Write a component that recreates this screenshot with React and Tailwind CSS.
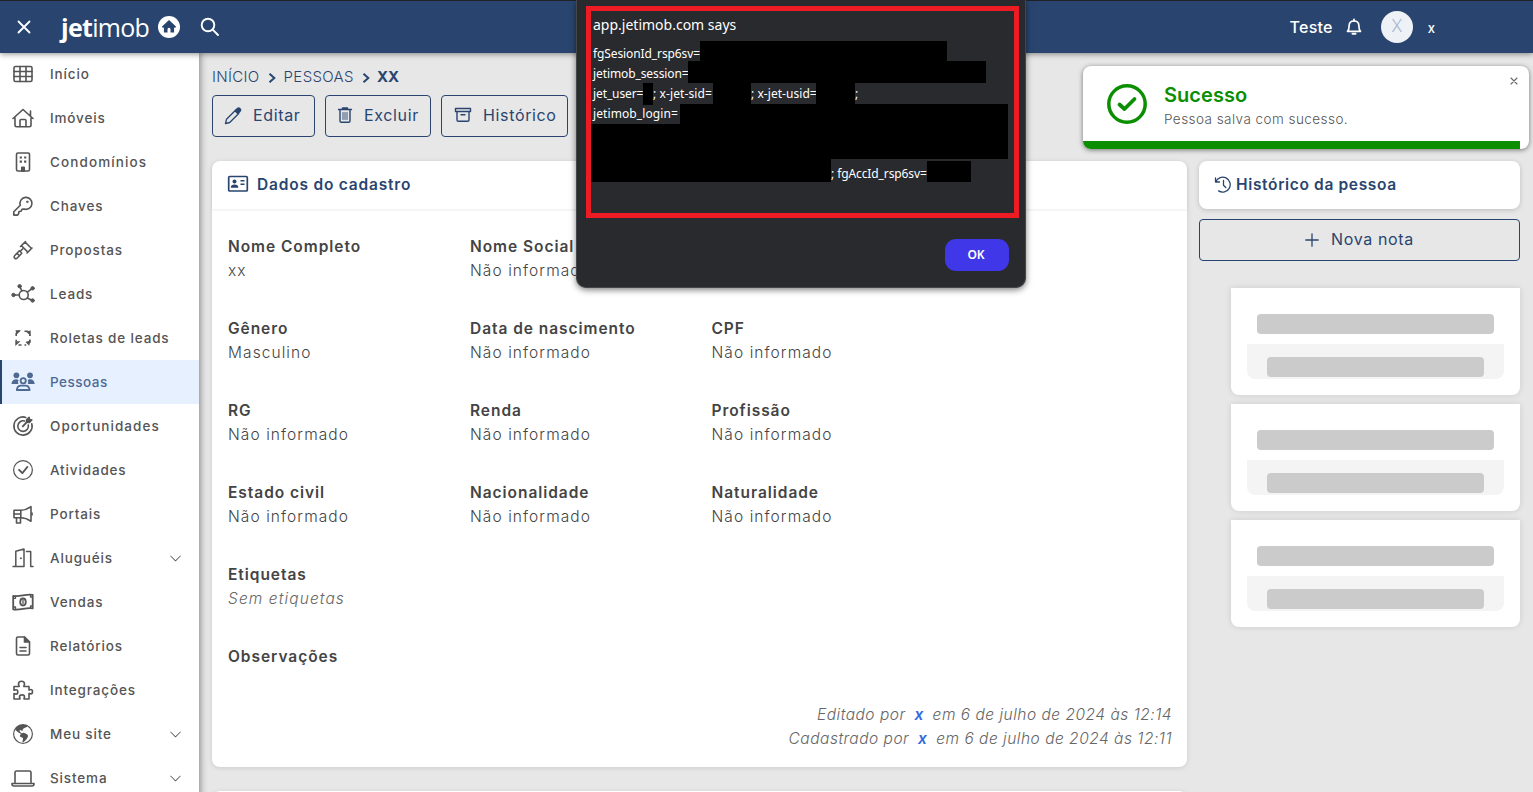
import React from 'react';
import { BsCheckCircle, BsChevronDown, BsGlobeAmericas } from 'react-icons/bs';

const Icon = ({ size = 24, children, className = '' }) => (
  <svg
    width={size}
    height={size}
    viewBox={`0 0 ${size} ${size}`}
    fill="none"
    stroke="currentColor"
    strokeWidth="1.6"
    strokeLinecap="round"
    strokeLinejoin="round"
    className={`shrink-0 ${className}`}
  >
    {children}
  </svg>
);

const icons = {
  grid: (
    <Icon>
      <rect x="3" y="4.5" width="18" height="15" rx="1.5" />
      <path d="M3 9.5h18M3 14.5h18M9 4.5v15M15 4.5v15" />
    </Icon>
  ),
  home: (
    <Icon>
      <path d="M2 12.5 12 3.5l10 9M19.5 9.500V5M4 11.5v7.5c0 1 .6 1.7 1.7 1.7h12.6c1.1 0 1.7-.7 1.7-1.7v-7.5" />
      <path d="M9 20.5v-6c0-.7.4-1 1-1h4c.6 0 1 .3 1 1v6" />
    </Icon>
  ),
  building: (
    <Icon>
      <rect x="5.5" y="3" width="13" height="18" rx="1.5" />
      <path d="M8.7 7.500h2.200M13.100 7.500h2.200M8.700 11.700h2.200M13.100 11.700h2.200" strokeWidth="2.2" strokeLinecap="butt" />
      <path d="M10.5 21v-4h3v4z" fill="currentColor" strokeWidth="1" />
    </Icon>
  ),
  key: (
    <Icon>
      <path d="M9.3 11.3A6 6 0 1 1 13 15l-2 .4-.9 1.8-2.1.3-.4 2.4-1.2 1.2H2.8v-3.4z" />
      <circle cx="16.3" cy="7.8" r="0.9" fill="currentColor" strokeWidth="0.6" />
    </Icon>
  ),
  gavel: (
    <Icon>
      <path d="m9.500 8.500 5-5M16 15l5-5M10.500 7.800l6.300 6.300M14 4l6.300 6.300" />
      <path d="m11.800 10.800-2.300 2.300M8.300 12.800l2.500 2.500-4.500 4.700c-.8.8-1.900.8-2.600.1s-.7-1.800.1-2.600zM6.200 15.500l1.900 1.900" strokeWidth="1.500" />
    </Icon>
  ),
  leads: (
    <Icon>
      <circle cx="12.700" cy="13" r="4.500" />
      <path d="M3 13h5.2M8.800 4.500l2 4.300M21 6.600l-4.700 3.600M16.200 16l4.600 2.300" />
      <g fill="currentColor" strokeWidth="1">
        <circle cx="2.5" cy="13" r="1.7" />
        <circle cx="8.6" cy="4.200" r="1.7" />
        <circle cx="21.6" cy="6.300" r="1.7" />
        <circle cx="21.6" cy="18.5" r="1.7" />
      </g>
    </Icon>
  ),
  roulette: (
    <Icon>
      <path d="M5.200 10V7M13.500 5.200h3.300M18.800 13.500v3.500M10.500 19H7.500M8.500 5.200H6.800M18.800 10V8.500M13.500 19h1.700M5.200 13.700v1.800" strokeLinecap="butt" />
      <g fill="currentColor" stroke="none">
        <path d="M4.500 4.300h5.500L5.500 8.800zM19.700 4.500V10l-4.800-4.500zM19.700 14.200l-1.500 5.500-3.700-3.700zM4.300 15.200h5.200L4.300 20z" />
      </g>
    </Icon>
  ),
  people: (
    <Icon>
      <g fill="currentColor" stroke="none">
        <circle cx="5.4" cy="5.3" r="2.9" />
        <circle cx="19" cy="5.3" r="2.9" />
        <path d="M.5 14c.2-3 2-4.7 4.7-4.7 1 0 1.8.2 2.4.6-.8 1.4-.7 2.8-.1 4.1zM23.7 14c-.2-3-2-4.7-4.7-4.7-1 0-1.8.2-2.4.6.8 1.4.7 2.8.1 4.1z" />
      </g>
      <circle cx="12.2" cy="10.7" r="2.6" strokeWidth="1.8" />
      <path d="M5.8 20c.3-3 2.1-4.4 4.2-4.4h4.4c2.1 0 3.9 1.4 4.2 4.4z" strokeWidth="1.8" />
    </Icon>
  ),
  target: (
    <Icon>
      <path d="M14.8 3.4A9.1 9.1 0 1 0 20.8 9.7M13.5 7a5.3 5.3 0 1 0 3.8 4" />
      <path d="m11.8 12.3 4-4.2" strokeWidth="1.9" />
      <path d="m15.5 5.7 2.6-2.5.6 2.2 2.2.6-2.5 2.6-2.9-.2z" fill="currentColor" strokeWidth="1.4" />
    </Icon>
  ),
  check: <BsCheckCircle className="size-5 shrink-0" />,
  megaphone: (
    <Icon>
      <path d="M3 8.3h7c4 0 6.8-1.4 10-3.6v14.6c-3.2-2.2-6-3.6-10-3.6H3z" />
      <path d="M5.5 16v5h4v-5M9.8 8.5V16M3 12h6.5M21 11v2" />
    </Icon>
  ),
  door: (
    <Icon>
      <path d="M2 20.5h11V3L4.8 5.3v15M15.5 5.5h4.2v15H22" strokeWidth="1.5" />
      <circle cx="9.8" cy="12.3" r="0.7" fill="currentColor" strokeWidth="0.5" />
    </Icon>
  ),
  money: (
    <Icon>
      <path d="M2.2 5.8c6.5 1.3 13-2.3 19.5-1v13.6c-6.5-1.3-13 2.3-19.5 1z" strokeWidth="1.800" />
      <ellipse cx="12" cy="12" rx="2.800" ry="3.500" strokeWidth="1.800" />
      <path d="M12 10.500v3M4.5 6v2.3H2.5M19.5 4.7V7h2M2.5 17h2v2.5M21.5 16h-2v2" strokeWidth="1.3" />
    </Icon>
  ),
  report: (
    <Icon>
      <path d="M5.5 4.5c0-.9.5-1.5 1.5-1.5h6.5l5 5v11.5c0 .9-.5 1.5-1.5 1.5H7c-1 0-1.5-.6-1.5-1.5zM9 13.5h6M9 17h6" />
      <path d="M13.5 3v5h5z" fill="currentColor" />
    </Icon>
  ),
  puzzle: (
    <Icon>
      <path d="M3 8.5h5.2c.3-.6-.7-1.3-.7-2.6C7.500 4 9 3.200 10.500 3.200s3 .8 3 2.700c0 1.300-1 2-.7 2.600H18V12c.6.3 1-.5 1.800-.5 1.100 0 1.700 1 1.700 2.200 0 1.300-.7 2.200-1.800 2.200-.8 0-1.100-.7-1.700-.5V21h-5c-.3-.7.500-1 .5-2.100 0-1.200-1-2-2.500-2s-2.500.8-2.500 2c0 1.100.8 1.400.5 2.100H3v-5.300c.6-.3 1.100.4 2 .4 1.100 0 1.800-1 1.800-2.200S6.100 11.700 5 11.700c-.9 0-1.400.8-2 .5z" />
    </Icon>
  ),
  globe: <BsGlobeAmericas className="size-5 shrink-0" />,
  laptop: (
    <Icon>
      <path d="M4 16.500V6.500c0-1 .6-1.500 1.500-1.500h13c.9 0 1.500.5 1.500 1.500v10" />
      <path d="M1 17.500h22v.5c0 1.300-.8 2-2 2H3c-1.200 0-2-.7-2-2z" />
    </Icon>
  ),
};

const menu = [
  { label: 'Início', icon: 'grid' },
  { label: 'Imóveis', icon: 'home' },
  { label: 'Condomínios', icon: 'building', tracking: 'tracking-[1.1px]' },
  { label: 'Chaves', icon: 'key' },
  { label: 'Propostas', icon: 'gavel' },
  { label: 'Leads', icon: 'leads' },
  { label: 'Roletas de leads', icon: 'roulette' },
  { label: 'Pessoas', icon: 'people', active: true, tracking: 'tracking-[0.5px]' },
  { label: 'Oportunidades', icon: 'target', tracking: 'tracking-[1.05px]' },
  { label: 'Atividades', icon: 'check' },
  { label: 'Portais', icon: 'megaphone' },
  { label: 'Aluguéis', icon: 'door', expandable: true },
  { label: 'Vendas', icon: 'money' },
  { label: 'Relatórios', icon: 'report' },
  { label: 'Integrações', icon: 'puzzle' },
  { label: 'Meu site', icon: 'globe', expandable: true },
  { label: 'Sistema', icon: 'laptop', expandable: true },
];

const fields = [
  { label: 'Nome Completo', value: 'xx' },
  { label: 'Nome Social', value: 'Não informado', last: true },
  { label: 'Gênero', value: 'Masculino' },
  { label: 'Data de nascimento', value: 'Não informado' },
  { label: 'CPF', value: 'Não informado' },
  { label: 'RG', value: 'Não informado' },
  { label: 'Renda', value: 'Não informado' },
  { label: 'Profissão', value: 'Não informado' },
  { label: 'Estado civil', value: 'Não informado' },
  { label: 'Nacionalidade', value: 'Não informado' },
  { label: 'Naturalidade', value: 'Não informado' },
];

const Header = () => (
  <header className="relative z-20 flex h-[53px] shrink-0 items-center border-t border-[#202124] bg-[#29456f] pb-px text-white shadow-[0_1px_6px_rgba(0,0,0,0.45)]">
    <Icon size={14} className="ml-[17px] mt-px">
      <path d="m1.500 1.500 11 11m0-11-11 11" strokeWidth="1.8" />
    </Icon>
    <div className="ml-[30px] flex w-[119px] items-center justify-between">
      <span className="font-['Open_Sans','Noto_Sans',sans-serif] text-[25px] leading-8 tracking-[-0.7px]">
        <b>jet</b>imob
      </span>
      <svg width="22" height="22" viewBox="0 0 22 22" className="shrink-0">
        <circle cx="11" cy="11" r="11" fill="#fff" />
        <path d="M11 4 3.800 10.700l1.300 1.300.8-.7v5.200h3.600v-3.200a1.500 1.500 0 0 1 3 0v3.200h3.600v-5.200l.8.700 1.300-1.300z" fill="#29456f" />
      </svg>
    </div>
    <Icon size={20} className="ml-5">
      <circle cx="8" cy="8" r="6.300" strokeWidth="1.900" />
      <path d="m12.700 12.700 5.300 5.300" strokeWidth="1.900" />
    </Icon>
    <div className="ml-auto mr-[98px] flex items-center">
      <span className="text-[16px] font-medium tracking-[0.250px]">Teste</span>
      <Icon size={18} className="ml-3">
        <path d="M2.500 13.300c1.300-1.200 1.600-2.500 1.600-5.300 0-3 1.900-5 4.900-5s4.900 2 4.900 5c0 2.800.3 4.100 1.600 5.300z" strokeWidth="1.700" />
        <path d="M9 1.500V3" strokeWidth="1.800" />
        <path d="M7.500 15.800h3" strokeWidth="2" />
      </Icon>
      <span className="ml-[18px] flex size-8 items-center justify-center rounded-full bg-[#eef1f6] text-[17px] font-light text-[#a9b9d0]">
        X
      </span>
      <span className="ml-[15px] mt-[3px] text-[13px] font-medium leading-4">x</span>
    </div>
  </header>
);

const Sidebar = () => (
  <nav className="relative z-10 -mt-px h-[748px] w-[199px] shrink-0 bg-white shadow-[1px_0_7px_rgba(0,0,0,0.45)]">
    {menu.map(({ label, icon, active, expandable, tracking = 'tracking-[0.85px]' }) => (
      <a
        key={label}
        className={`flex h-11 items-center border-l-2 pr-[17px] ${
          active ? 'border-[#29456f] bg-[#e6f0ff] text-[#4f6a92]' : 'border-transparent text-[#555]'
        }`}
      >
        <span className="ml-[9px] flex w-6 justify-center">{icons[icon]}</span>
        <span className={`ml-[15px] flex-1 whitespace-nowrap text-[13.5px] font-medium ${tracking}`}>{label}</span>
        {expandable && <BsChevronDown className="size-[13px]" />}
      </a>
    ))}
  </nav>
);

const ActionButton = ({ icon, children, className = '' }) => (
  <button
    type="button"
    className={`flex h-[42px] items-center rounded-[4px] border border-[#29456f] text-[16px] tracking-[0.65px] text-[#29456f] ${className}`}
  >
    {icon}
    <span className="-mt-0.5">{children}</span>
  </button>
);

const Crumb = () => (
  <Icon size={10} className="mx-[7px]">
    <path d="m2.500 .8 4.800 4.200-4.800 4.200" strokeWidth="2" strokeLinecap="butt" strokeLinejoin="miter" />
  </Icon>
);

const Field = ({ label, children, className = '' }) => (
  <div className={`mb-[34px] leading-6 ${className}`}>
    <div className="text-[15.5px] font-semibold tracking-[0.95px] text-[#444]">{label}</div>
    {children}
  </div>
);

const DataCard = () => (
  <section className="mt-6 h-[606px] w-[975px] rounded-lg bg-white shadow-[0_1px_5px_rgba(0,0,0,0.12)]">
    <h2 className="flex h-12 items-center rounded-t-lg pl-[15px] text-[15.5px] font-semibold tracking-[0.8px] text-[#29456f] shadow-[0_1px_3px_rgba(0,0,0,0.08)]">
      <Icon size={22} className="-mt-0.5 mr-2">
        <rect x="1.700" y="3.500" width="18.600" height="14.500" rx="1" strokeWidth="1.700" />
        <circle cx="7.500" cy="8.500" r="2" fill="currentColor" stroke="none" />
        <path d="M3.800 14.800c0-2 1.300-3.200 3.700-3.200s3.800 1.200 3.800 3.200z" fill="currentColor" stroke="none" />
        <path d="M13.500 7.800h4M13.500 11.200h4" strokeLinecap="butt" />
      </Icon>
      Dados do cadastro
    </h2>
    <div className="grid grid-cols-[242px_241.5px_1fr] px-4 pt-[26px]">
      {fields.map(({ label, value, last }) => (
        <Field key={label} label={label} className={last ? 'col-span-2' : ''}>
          <div className="text-[15.5px] font-light tracking-[1.08px] text-[#444]">{value}</div>
        </Field>
      ))}
      <Field label="Etiquetas" className="col-span-3">
        <div className="text-[15.5px] font-light italic tracking-[1.1px] text-[#666]">Sem etiquetas</div>
      </Field>
      <Field label="Observações" className="col-span-3" />
    </div>
    <div className="px-[15px] text-right text-[15.5px] font-light italic leading-6 tracking-[0.5px] text-[#666]">
      <p>
        Editado por <b className="mx-[4px] font-semibold text-[#2f6ae0]">x</b> em 6 de julho de 2024 às 12:14
      </p>
      <p>
        Cadastrado por <b className="mx-[4px] font-semibold text-[#2f6ae0]">x</b> em 6 de julho de 2024 às 12:11
      </p>
    </div>
  </section>
);

const SkeletonCard = () => (
  <div className="h-[107px] rounded-b-lg bg-white px-4 pt-[26px] shadow-[0_0_6px_rgba(0,0,0,0.12)]">
    <div className="mx-[10px] h-5 rounded bg-[#cbcbcb]" />
    <div className="mt-[10px] h-[35px] rounded-b-lg bg-[#f4f4f4] px-5 pt-[13px]">
      <div className="h-5 rounded bg-[#cbcbcb]" />
    </div>
  </div>
);

const History = () => (
  <aside className="mt-[108px] w-[321px]">
    <h2 className="flex h-12 items-center rounded-lg bg-white pl-[15px] text-[15.5px] font-semibold tracking-[0.65px] text-[#29456f] shadow-[0_1px_5px_rgba(0,0,0,0.18)]">
      <Icon size={18} className="mr-1">
        <path d="M1.500 2v4h4M1.800 5.700a7.500 7.500 0 1 1 2.800 9.200M9.500 4.500v4.800l2.300 2.200" strokeWidth="1.300" />
      </Icon>
      Histórico da pessoa
    </h2>
    <ActionButton
      className="mt-[10px] w-full justify-center"
      icon={
        <Icon size={14} className="mr-3">
          <path d="M7 .8v12.400M.8 7h12.400" strokeWidth="1.300" />
        </Icon>
      }
    >
      Nova nota
    </ActionButton>
    <div className="ml-8 mt-[27px] flex flex-col gap-[9px]">
      <SkeletonCard />
      <SkeletonCard />
      <SkeletonCard />
    </div>
  </aside>
);

const Toast = () => (
  <div className="absolute left-[1083px] top-[66px] z-30 flex h-[83px] w-[446px] flex-col overflow-hidden rounded-lg bg-white shadow-[0_1px_5px_rgba(0,0,0,0.5)]">
    <div className="flex flex-1 items-center pl-6">
      <Icon size={40}>
        <circle cx="20" cy="20" r="18.200" stroke="#0b8f00" strokeWidth="3.500" />
        <path d="m12.500 20.500 5 4.500 10-10" stroke="#0b8f00" strokeWidth="3.800" />
      </Icon>
      <div className="ml-[17px] flex-1 pt-[7px]">
        <div className="text-[20px] font-semibold leading-6 tracking-[0.05px] text-[#0b8f00]">Sucesso</div>
        <div className="text-[13.5px] font-light leading-6 tracking-[0.45px] text-[#555]">Pessoa salva com sucesso.</div>
      </div>
      <Icon size={8} className="mb-[46px] mr-[11px] text-[#666]">
        <path d="m1 1 6 6m0-6-6 6" strokeWidth="1.100" />
      </Icon>
    </div>
    <div className="h-2 w-[437px] bg-[#0b8f00]" />
  </div>
);

const Alert = () => (
  <div className="absolute left-[576px] top-0 z-40 h-[288px] w-[450px] rounded-b-[10px] border border-t-0 border-[#45464a] bg-[#292a2d] pl-[9px] pr-2 pt-[6px] font-['Noto_Sans','Open_Sans',sans-serif] text-white shadow-[0_2px_6px_rgba(0,0,0,0.5)]">
    <div className="h-[212px] w-[433px] border-5 border-[#ed1c24] text-[12px] leading-5 tracking-[-0.1px]">
      <div className="h-[30px] pl-[2px] pt-1 text-[14px] tracking-[0px]">app.jetimob.com says</div>
      <div className="flex h-5">
        <span className="w-[109px] overflow-hidden whitespace-nowrap pl-[2px] pt-[3px]">fgSesionId_rsp6sv=</span>
        <span className="w-[247px] bg-black" />
      </div>
      <div className="flex h-[22px]">
        <span className="w-[97px] overflow-hidden whitespace-nowrap pl-[2px] pt-[3px]">jetimob_session=</span>
        <span className="w-[298px] bg-black" />
      </div>
      <div className="flex h-[21px] whitespace-nowrap">
        <span className="w-[52px] overflow-hidden pl-[2px] pt-px">jet_user=</span>
        <span className="h-[22px] w-[10px] bg-black" />
        <span className="w-[60px] overflow-hidden pt-px tracking-[0.1px]">; x-jet-sid=</span>
        <span className="w-[38px] bg-black" />
        <span className="w-[65px] overflow-hidden pt-px tracking-[0.05px]">; x-jet-usid=</span>
        <span className="w-[39px] bg-black" />
        <span className="pt-px">;</span>
      </div>
      <div className="flex h-5">
        <span className="w-[89px] overflow-hidden whitespace-nowrap pl-[2px] tracking-[0.1px]">jetimob_login=</span>
        <span className="w-[328px] bg-black" />
      </div>
      <div className="h-[35px] w-[417px] bg-black" />
      <div className="flex h-[23px] whitespace-nowrap">
        <span className="w-[240px] bg-black" />
        <span className="w-[96px] overflow-hidden pt-[5px]">; fgAccId_rsp6sv=</span>
        <span className="mt-[2px] w-[44px] bg-black" />
      </div>
    </div>
    <button type="button" className="ml-auto mr-2 mt-[21px] block h-8 w-16 rounded-[11px] bg-[#4038e8] pr-0.5 text-[12px] font-semibold">
      OK
    </button>
  </div>
);

const App = () => (
  <div className="relative flex h-[792px] w-[1533px] flex-col overflow-hidden bg-[#e7e7e7] font-['Inter','Noto_Sans',sans-serif]">
    <Header />
    <div className="flex min-h-0 flex-1">
      <Sidebar />
      <main className="ml-[13px] flex gap-3">
        <div>
          <div className="flex h-[42px] items-center pt-[7px] text-[15px] font-light tracking-[0.35px] text-[#29456f]">
            INÍCIO
            <Crumb />
            PESSOAS
            <Crumb />
            <b className="-ml-px font-bold tracking-normal">XX</b>
          </div>
          <div className="flex gap-[10px]">
            <ActionButton
              className="w-[103px] pl-[10px]"
              icon={
                <Icon size={20} className="mr-[10px]">
                  <path d="m2.500 17.500 1-4.200 9-9 3.200 3.200-9 9zM12 4.800l3.200 3.200" strokeWidth="1.300" />
                  <path d="m12.800 4.200 1.700-1.600c.8-.8 1.800-.6 2.500.1s.8 1.700 0 2.500l-1.600 1.700z" fill="currentColor" />
                </Icon>
              }
            >
              Editar
            </ActionButton>
            <ActionButton
              className="w-[106px] pl-[10px]"
              icon={
                <Icon size={18} className="-mt-0.5 mr-[10px]">
                  <path d="M2.500 3.500h13M6.500 3.300V2h5v1.300M4 3.800V15c0 .8.500 1.300 1.300 1.300h7.400c.8 0 1.300-.5 1.300-1.300V3.800" strokeWidth="1.400" />
                  <path d="M7 6.500v7M9 6.500v7M11 6.500v7" strokeWidth="0.900" />
                </Icon>
              }
            >
              Excluir
            </ActionButton>
            <ActionButton
              className="w-[127px] pl-3"
              icon={
                <Icon size={18} className="-mt-0.5 mr-[11px]">
                  <path d="M1.500 2.500h15v3h-15zM3 5.500V14c0 .8.500 1.300 1.300 1.300h9.400c.8 0 1.300-.5 1.300-1.300V5.500M7 8.700h4" strokeWidth="1.400" />
                </Icon>
              }
            >
              Histórico
            </ActionButton>
          </div>
          <DataCard />
          <section className="mt-6 h-20 w-[975px] rounded-lg bg-white shadow-[0_1px_5px_rgba(0,0,0,0.12)]" />
        </div>
        <History />
      </main>
    </div>
    <Toast />
    <Alert />
  </div>
);

export default App;
